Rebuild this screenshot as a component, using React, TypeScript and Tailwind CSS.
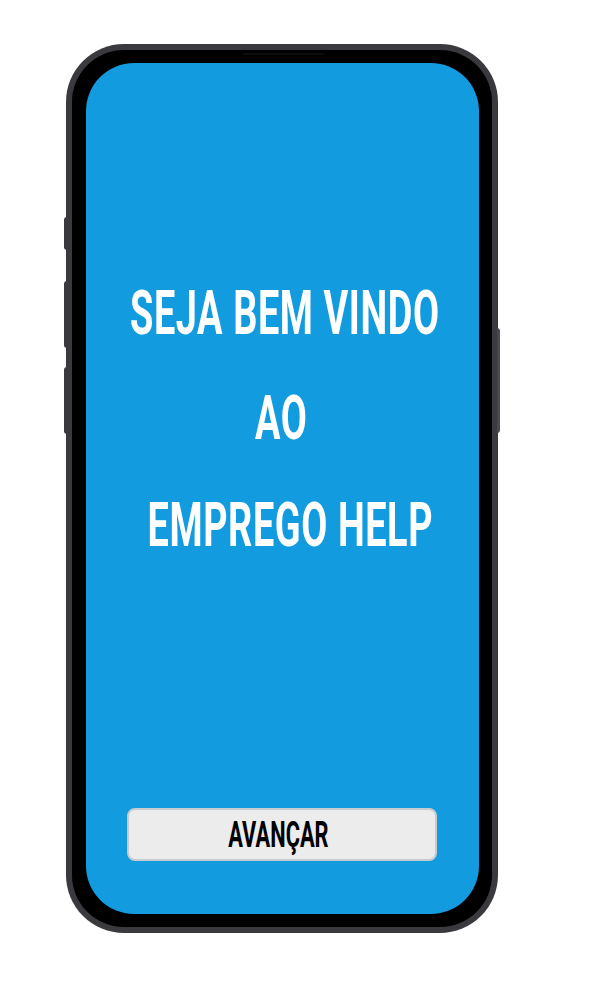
const font = { fontFamily: 'Roboto, "Liberation Sans", sans-serif' };

function Title({ text }: { text: string }) {
  return (
    <div className="flex h-[62px] justify-center">
      <span className="inline-block scale-x-[0.61] whitespace-pre text-[62px] font-bold leading-none tracking-[1px] text-white">
        {text}
      </span>
    </div>
  );
}

export default function App() {
  return (
    <div className="min-h-screen bg-white pl-[66px] pt-[44px]" style={font}>
      <div className="relative h-[889px] w-[432px]">
        {/* side buttons */}
        <div className="absolute left-[-2px] top-[173px] h-[33px] w-[3px] rounded-l bg-[#3a393e]" />
        <div className="absolute left-[-2px] top-[237px] h-[67px] w-[3px] rounded-l bg-[#3a393e]" />
        <div className="absolute left-[-2px] top-[323px] h-[67px] w-[3px] rounded-l bg-[#3a393e]" />
        <div className="absolute right-[-2px] top-[284px] h-[105px] w-[3px] rounded-r bg-[#4a494e]" />

        <div className="h-full rounded-[58px] bg-[#3a393e] p-[6px]">
          <div className="relative flex h-full flex-col rounded-[52px] bg-black p-[13px] pl-[14px]">
            <div className="absolute left-[170px] top-[3px] h-[2px] w-[83px] rounded-full bg-[#0d0d0d]" />
            <div className="flex flex-1 flex-col rounded-[48px] bg-[#139be0] px-[41px] pb-[53px] pt-[219px]">
              <div className="pl-[5px]">
                <Title text="SEJA BEM VINDO" />
              </div>
              <div className="mt-[43px] pl-[7px]">
                <Title text="AO " />
              </div>
              <div className="mt-[45px] pl-[5px]">
                <Title text=" EMPREGO HELP" />
              </div>
              <button className="mt-auto flex h-[53px] w-[310px] items-center justify-center rounded-[8px] border-2 border-[#c9cccf] bg-[#ececec]">
                <span className="inline-block scale-x-[0.59] pr-[12px] text-[37px] font-bold leading-none text-black">
                  AVANÇAR
                </span>
              </button>
            </div>
          </div>
        </div>
      </div>
    </div>
  );
}
